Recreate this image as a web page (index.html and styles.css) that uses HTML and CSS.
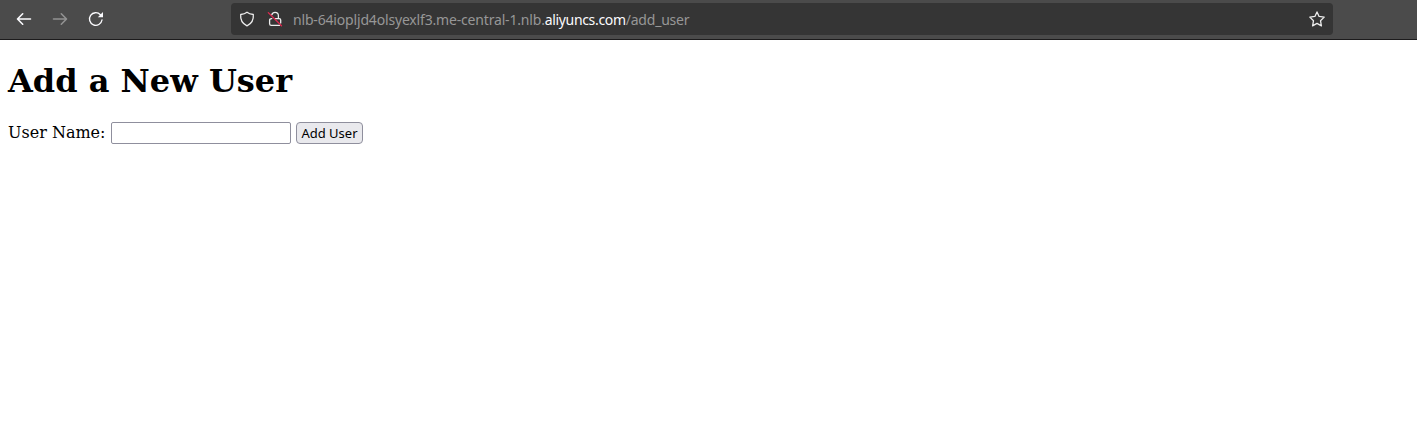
FILE: index.html
```html
<!DOCTYPE html>
<html lang="en">
<head>
<meta charset="utf-8">
<title>Add a New User</title>
<link rel="stylesheet" href="styles.css">
</head>
<body>
<header class="toolbar">
  <nav class="nav">
    <svg class="icon" viewBox="0 0 16 16"><path d="M14.500 8H2M6.700 2.800 1.500 8l5.200 5.200"/></svg>
    <svg class="icon icon-disabled" viewBox="0 0 16 16"><path d="M1.500 8H14M9.300 2.800 14.500 8l-5.200 5.200"/></svg>
    <svg class="icon reload" viewBox="0 0 16 16"><path d="M12.400 3.700A6.300 6.300 0 1 0 14 9"/><path class="solid" d="M15 1v5.200H9.800z"/></svg>
  </nav>
  <div class="urlbar">
    <svg class="icon thin" viewBox="0 0 16 16"><path d="M8 1.200C6.200 2.600 4 3.200 1.700 3.500 1.200 8.700 3.300 12.600 8 14.800c4.700-2.200 6.800-6.100 6.300-11.300C12 3.200 9.800 2.600 8 1.200z"/></svg>
    <svg class="icon thin lock" viewBox="0 0 16 16"><path d="M4.800 3.700C5.300 2.200 6.300 1.300 8 1.300c2.100 0 3.400 1.400 3.400 3.500v2.800M8.300 7.600h3.900q1.500 0 1.500 1.500v3M4.800 7.600q-2.200 0-2.200 1.700v3.500q0 1.600 1.600 1.600h8.200"/><path class="slash" d="m1.300 1.600 13.200 13.200"/></svg>
    <div class="url"><span class="host">nlb-64iopljd4olsyexlf3.me-central-1.nlb.</span><span class="domain">aliyuncs.com</span><span class="path">/add_user</span></div>
    <svg class="icon thin" viewBox="0 0 16 16"><path d="m8 .9 2.100 4.500 5.100.7-3.700 3.600.9 5.200L8 12.400l-4.400 2.500.9-5.200L.8 6.100l5.100-.7z"/></svg>
  </div>
</header>
<main class="page">
  <h1 class="title">Add a New User</h1>
  <form class="form">
    <label class="label" for="name">User Name:</label>
    <input class="input" id="name" type="text">
    <button class="button" type="button">Add User</button>
  </form>
</main>
</body>
</html>
```
FILE: styles.css
```css
* { box-sizing: border-box; }
body { margin: 0; background: #fff; color: #000; font-family: "DejaVu Serif", serif; }
.toolbar { display: flex; height: 40px; padding: 3px 84px 0 16px; background: #4b4b4b; border-bottom: 1px solid #1c1b1c; }
.nav { display: flex; gap: 20px; width: 215px; height: 32px; align-items: center; }
.icon { width: 16px; height: 16px; flex: none; fill: none; stroke: #fbfbfe; stroke-width: 1.6; stroke-linecap: round; stroke-linejoin: round; }
.icon-disabled { stroke: #929292; }
.reload { stroke-width: 1.35; }
.thin { stroke-width: 1.3; stroke: #ececec; }
.solid { fill: #fbfbfe; stroke: none; }
.slash { stroke: #e22850; }
.urlbar { display: flex; flex: 1; height: 32px; align-items: center; padding: 0 8px; background: #353535; border-radius: 4px; }
.lock { margin: 0 10px 0 12px; }
.url { display: flex; flex: 1; padding-top: 2px; font: 14px/20px "Noto Sans", sans-serif; color: #979797; white-space: nowrap; }
.host { letter-spacing: -0.175px; }
.domain { color: #fbfbfe; letter-spacing: -0.34px; }
.path { letter-spacing: -0.2px; }
.page { padding: 0 8px; }
.title { margin: 0; padding-top: 22px; font-size: 32px; line-height: 38px; }
.form { display: flex; align-items: center; margin-top: 22px; height: 22px; }
.label { font-size: 16px; line-height: 19px; width: 103px; margin-top: -2px; white-space: nowrap; }
.input { width: 180px; height: 22px; margin: 0 5px 0 0; border: 1px solid #8f8f9d; border-radius: 2px; background: #fff; }
.button { width: 67px; height: 22px; padding: 0; border: 1px solid #8f8f9d; border-radius: 4px; background: #e9e9ed; color: #000; font: 13px/18px "Noto Sans", sans-serif; }
```
